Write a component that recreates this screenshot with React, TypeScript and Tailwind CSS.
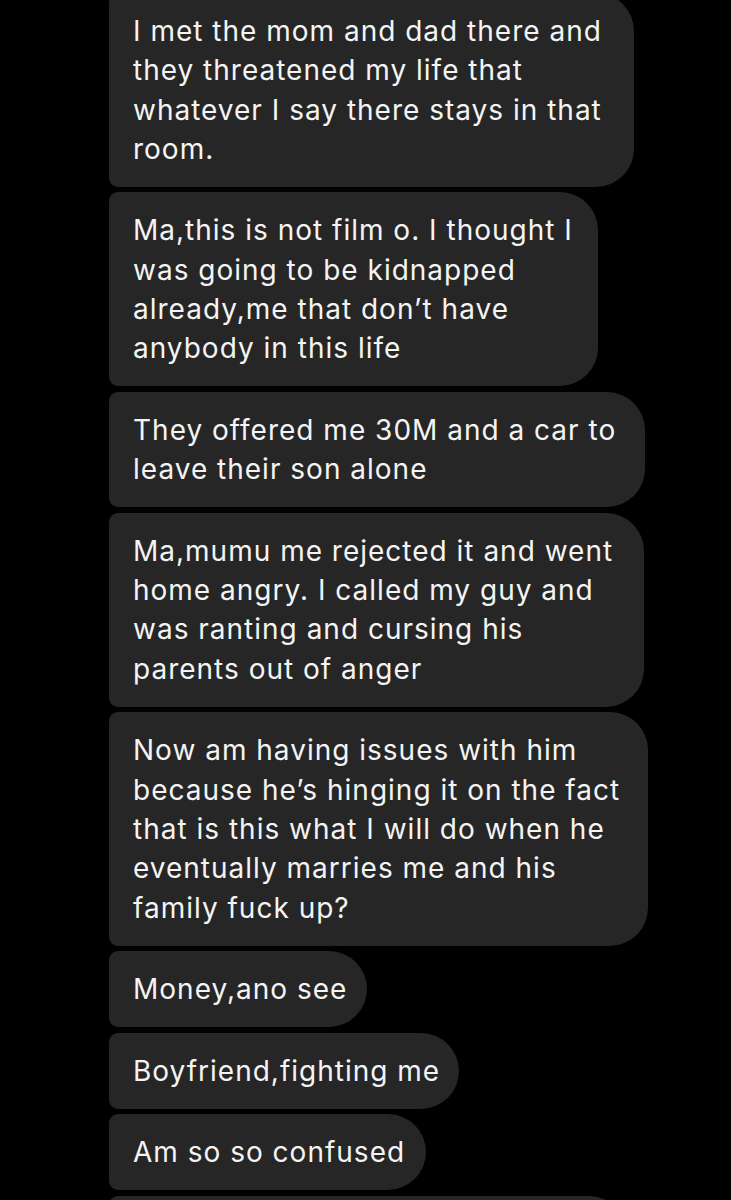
import React from "react";

type Msg = { lines: string[]; w: number };

const msgs: Msg[] = [
  {
    lines: [
      "I met the mom and dad there and",
      "they threatened my life that",
      "whatever I say there stays in that",
      "room.",
    ],
    w: 525,
  },
  {
    lines: [
      "Ma,this is not film o. I thought I",
      "was going to be kidnapped",
      "already,me that don\u2019t have",
      "anybody in this life",
    ],
    w: 489,
  },
  {
    lines: ["They offered me 30M and a car to", "leave their son alone"],
    w: 536,
  },
  {
    lines: [
      "Ma,mumu me rejected it and went",
      "home angry. I called my guy and",
      "was ranting and cursing his",
      "parents out of anger",
    ],
    w: 535,
  },
  {
    lines: [
      "Now am having issues with him",
      "because he\u2019s hinging it on the fact",
      "that is this what I will do when he",
      "eventually marries me and his",
      "family fuck up?",
    ],
    w: 539,
  },
  { lines: ["Money,ano see"], w: 258 },
  { lines: ["Boyfriend,fighting me"], w: 350 },
  { lines: ["Am so so confused"], w: 317 },
];

export default function App() {
  return (
    <div className="w-[731px] h-[1200px] overflow-hidden bg-black">
      <div className="flex flex-col items-start gap-[5.5px] pl-[109px] -mt-[7px]">
        {msgs.map((m, i) => (
          <div
            key={i}
            style={{ width: m.w }}
            className="bg-[#262626] rounded-l-[9px] rounded-r-[38px] pl-[24px] pt-[19px] pb-[17.8px] text-[28px] leading-[39.3px] text-[#f4f4f4] tracking-[1px]"
          >
            {m.lines.map((l, j) => (
              <div key={j} className="whitespace-nowrap" style={{ fontFamily: "Inter, 'Noto Sans', sans-serif" }}>
                {l}
              </div>
            ))}
          </div>
        ))}
        <div className="w-[518px] h-[76px] shrink-0 bg-[#262626] rounded-l-[9px] rounded-r-[38px]" />
      </div>
    </div>
  );
}
